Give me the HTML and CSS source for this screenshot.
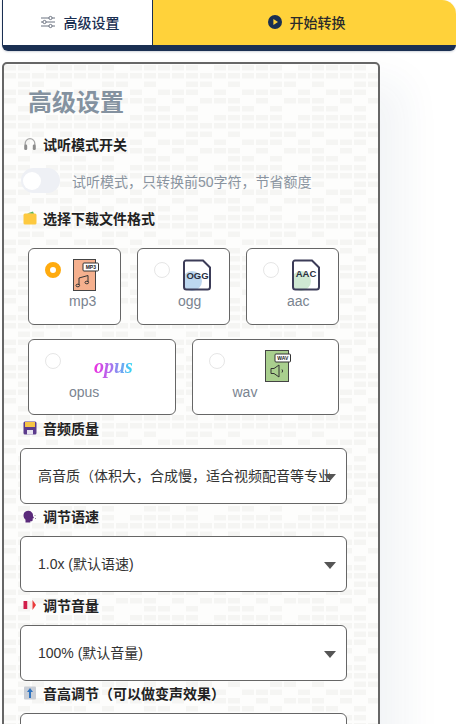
FILE: index.html
```html
<!DOCTYPE html>
<html lang="zh-CN">
<head>
    <meta charset="UTF-8">
    <meta name="viewport" content="width=device-width, initial-scale=1.0">
    <title>高级设置</title>
    <link rel="stylesheet" href="styles.css">
</head>
<body>

    <div class="tabs">
        <div class="tab tab-settings">
            <svg class="tab-icon" width="16" height="14" viewBox="0 0 16 14" fill="none" stroke="#6b7280" stroke-width="1">
                <path d="M1 3h8M12 3h3M1 7h2M6 7h9M1 11h8M12 11h3"/>
                <circle cx="10.5" cy="3" r="1.6"/>
                <circle cx="4.5" cy="7" r="1.6"/>
                <circle cx="10.5" cy="11" r="1.6"/>
            </svg>
            高级设置
        </div>
        <div class="tab tab-start">
            <svg class="tab-icon" width="14" height="14" viewBox="0 0 14 14">
                <circle cx="7" cy="7" r="7" fill="#1a2f52"/>
                <path d="M5.4 4v6L10 7z" fill="#ffd23a"/>
            </svg>
            开始转换
        </div>
    </div>

    <div class="panel">
        <h2 class="panel-title">高级设置</h2>

        <div class="label label-first">
            <svg class="emoji" viewBox="0 0 14 14">
                <path d="M2.2 8V6.500a4.800 4.800 0 0 1 9.600 0V8" fill="none" stroke="#a8a8a8" stroke-width="1.300"/>
                <rect x="1.200" y="7.500" width="3" height="5.500" rx="1.300" fill="#8d8d8d"/>
                <rect x="9.800" y="7.500" width="3" height="5.500" rx="1.300" fill="#8d8d8d"/>
            </svg>
            试听模式开关
        </div>
        <div class="toggle-row">
            <div class="toggle"><span class="knob"></span></div>
            <span class="hint">试听模式，只转换前50字符，节省额度</span>
        </div>

        <div class="label label-format">
            <svg class="emoji" viewBox="0 0 14 14">
                <path d="M4 2.500l6-2 1 2.500z" fill="#5fb55a"/>
                <rect x="0.500" y="2.500" width="13" height="11" rx="1.500" fill="#fdc93f"/>
            </svg>
            选择下载文件格式
        </div>

        <div class="formats">
            <label class="card card-small">
                <span class="radio radio-on"></span>
                <span class="card-body">
                    <svg class="file-icon icon-mp3" width="26" height="32" viewBox="0 0 26 32">
                        <rect x="0.500" y="0.500" width="22" height="31" fill="#f5b08e" stroke="#444"/>
                        <rect x="10" y="4" width="15.500" height="8" rx="1" fill="#fff" stroke="#333"/>
                        <text x="17.800" y="10.200" class="tiny-text">MP3</text>
                        <path d="M6 26V19l9-2.500V23" fill="none" stroke="#333" stroke-width="1"/>
                        <ellipse cx="4.800" cy="26.500" rx="1.800" ry="1.300" fill="none" stroke="#333"/>
                        <ellipse cx="13.800" cy="23.500" rx="1.800" ry="1.300" fill="none" stroke="#333"/>
                    </svg>
                    <span class="card-name">mp3</span>
                </span>
            </label>
            <label class="card card-small">
                <span class="radio"></span>
                <span class="card-body">
                    <svg class="file-icon icon-ogg" width="29" height="32" viewBox="0 0 29 32">
                        <circle cx="9" cy="22" r="10" fill="#bdd7ef"/>
                        <path d="M3 1.500h17l7 7V28a2.500 2.500 0 0 1-2.500 2.500H3.500A2.500 2.500 0 0 1 1 28V3.500A2 2 0 0 1 3 1.500z" fill="none" stroke="#3c3c58" stroke-width="2"/>
                        <text x="14.500" y="20" class="file-text">OGG</text>
                    </svg>
                    <span class="card-name">ogg</span>
                </span>
            </label>
            <label class="card card-small">
                <span class="radio"></span>
                <span class="card-body">
                    <svg class="file-icon icon-aac" width="29" height="32" viewBox="0 0 29 32">
                        <circle cx="9" cy="22" r="10" fill="#cfe8d3"/>
                        <path d="M3 1.500h17l7 7V28a2.500 2.500 0 0 1-2.500 2.500H3.500A2.500 2.500 0 0 1 1 28V3.500A2 2 0 0 1 3 1.500z" fill="none" stroke="#3c3c58" stroke-width="2"/>
                        <text x="14" y="18" class="file-text">AAC</text>
                    </svg>
                    <span class="card-name">aac</span>
                </span>
            </label>
            <label class="card card-wide">
                <span class="radio"></span>
                <span class="card-body">
                    <span class="opus-logo">opus</span>
                    <span class="card-name">opus</span>
                </span>
            </label>
            <label class="card card-wide">
                <span class="radio"></span>
                <span class="card-body">
                    <svg class="file-icon icon-wav" width="26" height="32" viewBox="0 0 26 32">
                        <rect x="0.500" y="0.500" width="23" height="31" fill="#a9cf8e" stroke="#444"/>
                        <rect x="10" y="4" width="15.500" height="8" rx="1" fill="#fff" stroke="#333"/>
                        <text x="17.800" y="10.200" class="tiny-text">WAV</text>
                        <path d="M6 18.500h3l5-3.500v12l-5-3.500H6z" fill="none" stroke="#333"/>
                        <path d="M17 19.500q1.200 1.500 0 3" fill="none" stroke="#333"/>
                    </svg>
                    <span class="card-name">wav</span>
                </span>
            </label>
        </div>

        <div class="label label-quality">
            <svg class="emoji" viewBox="0 0 14 14">
                <rect x="0.500" y="0.500" width="13" height="13" rx="1.500" fill="#5b3a8c"/>
                <rect x="2" y="1" width="10" height="5" fill="#f6c445"/>
                <rect x="4" y="9" width="6" height="4.500" fill="#e8e4f0"/>
            </svg>
            音频质量
        </div>
        <div class="select-wrap">
            <select class="select">
                <option>高音质（体积大，合成慢，适合视频配音等专业用途）</option>
            </select>
        </div>

        <div class="label">
            <svg class="emoji" viewBox="0 0 14 14">
                <path d="M0.500 7a4.800 4.800 0 0 1 8.800-3c.700 1 .700 2.200.700 3l1 2-1.300.500v1.500c0 1-1 1.500-2.400 1.200V13.500H2.500v-2.800A5 5 0 0 1 .500 7z" fill="#5a2a7a"/>
                <path d="M12 6v1M12.500 9v1" stroke="#888" stroke-width="0.900"/>
            </svg>
            调节语速
        </div>
        <div class="select-wrap">
            <select class="select">
                <option>1.0x (默认语速)</option>
            </select>
        </div>

        <div class="label label-volume">
            <svg class="emoji" viewBox="0 0 14 14">
                <rect x="0.500" y="3" width="4" height="8" fill="#d11f4b"/>
                <rect x="4.500" y="3" width="5" height="8" fill="#f7f0ee"/>
                <path d="M9.500 2l3.500 5-3.500 5z" fill="#ea3a3a"/>
            </svg>
            调节音量
        </div>
        <div class="select-wrap">
            <select class="select">
                <option>100% (默认音量)</option>
            </select>
        </div>

        <div class="label">
            <svg class="emoji" viewBox="0 0 14 14">
                <rect x="1" y="0.500" width="12" height="13" rx="1" fill="#c9ced6"/>
                <path d="M7 2L4 6h2v6h2V6h2z" fill="#2f74c0"/>
            </svg>
            音高调节（可以做变声效果）
        </div>
        <div class="select-wrap">
            <select class="select">
                <option>1.0 (默认音高)</option>
            </select>
        </div>
    </div>

</body>
</html>
```
FILE: styles.css
```css
html, body {
    height: 100%;
    overflow: hidden;
}
body {
    margin: 0;
    background: #fff;
    font-family: "Liberation Sans", "Noto Sans CJK SC", sans-serif;
    color: #222;
}
.tabs {
    display: flex;
    height: 45px;
    margin-left: 2px;
    border-bottom: 6px solid #1a2f52;
    border-radius: 0 14px 6px 6px;
    box-shadow: 0 1px 2px rgba(26, 47, 82, 0.2);
}
.tab {
    display: flex;
    align-items: center;
    justify-content: center;
    gap: 8px;
    box-sizing: border-box;
    padding: 0 0 1px 4px;
    font-size: 14px;
    font-weight: 500;
    color: #1a2f52;
}
.tab-settings {
    width: 151px;
    background: #fff;
    border-left: 1px solid #1a2f52;
    border-right: 1px solid #1a2f52;
}
.tab-start {
    flex: 1;
    background: #ffd23a;
    color: #2a2a2a;
    border-radius: 0 14px 0 0;
}
.tab-icon {
    flex-shrink: 0;
}
.panel {
    box-sizing: border-box;
    width: 378px;
    height: 760px;
    margin: 11px 0 0 2px;
    padding: 24px 31px 0 16px;
    border: 2px solid #666;
    border-radius: 5px;
    box-shadow: 24px 20px 40px rgba(40, 60, 100, 0.06);
    background-color: #fdfdfc;
    background-image: url("data:image/svg+xml,%3Csvg xmlns='http://www.w3.org/2000/svg' width='84' height='50'%3E%3Cg fill='%23f5f5f3'%3E%3Crect x='0' y='1' width='12' height='5.500'/%3E%3Crect x='14' y='1' width='12' height='5.500'/%3E%3Crect x='42' y='1' width='12' height='5.500'/%3E%3Crect x='56' y='1' width='12' height='5.500'/%3E%3Crect x='70' y='1' width='12' height='5.500'/%3E%3Crect x='0' y='9' width='12' height='5.500'/%3E%3Crect x='14' y='9' width='12' height='5.500'/%3E%3Crect x='28' y='9' width='12' height='5.500'/%3E%3Crect x='42' y='9' width='12' height='5.500'/%3E%3Crect x='56' y='9' width='12' height='5.500'/%3E%3Crect x='70' y='9' width='12' height='5.500'/%3E%3Crect x='14' y='17.500' width='12' height='5.500'/%3E%3Crect x='28' y='17.500' width='12' height='5.500'/%3E%3Crect x='56' y='17.500' width='12' height='5.500'/%3E%3Crect x='0' y='25.500' width='12' height='5.500'/%3E%3Crect x='14' y='25.500' width='12' height='5.500'/%3E%3Crect x='42' y='25.500' width='12' height='5.500'/%3E%3Crect x='70' y='25.500' width='12' height='5.500'/%3E%3Crect x='0' y='34' width='12' height='5.500'/%3E%3Crect x='28' y='34' width='12' height='5.500'/%3E%3Crect x='42' y='34' width='12' height='5.500'/%3E%3Crect x='56' y='34' width='12' height='5.500'/%3E%3Crect x='14' y='42' width='12' height='5.500'/%3E%3Crect x='56' y='42' width='12' height='5.500'/%3E%3Crect x='70' y='42' width='12' height='5.500'/%3E%3C/g%3E%3C/svg%3E");
}
.panel-title {
    height: 30px;
    margin: 0 0 0 8px;
    font-size: 24px;
    line-height: 30px;
    font-weight: 700;
    color: #8492a0;
}
.label {
    display: flex;
    align-items: center;
    gap: 6px;
    box-sizing: border-box;
    height: 18px;
    margin: 4px 0 0 3px;
    padding-bottom: 2px;
    font-size: 14px;
    font-weight: 700;
    color: #222;
}
.label-first {
    margin-top: 18px;
}
.label-format {
    margin-top: 17px;
}
.label-volume {
    margin-top: 5px;
}
.label-quality {
    margin-top: 5px;
}
.emoji {
    width: 14px;
    height: 14px;
    flex-shrink: 0;
}
.toggle-row {
    display: flex;
    align-items: center;
    gap: 12px;
    margin: 14px 0 0 1px;
}
.toggle {
    display: flex;
    align-items: center;
    box-sizing: border-box;
    width: 39px;
    height: 25px;
    padding-left: 2px;
    background: #eef0f5;
    border-radius: 13px;
}
.knob {
    width: 18px;
    height: 18px;
    background: #fff;
    border-radius: 50%;
}
.hint {
    font-size: 14px;
    color: #8a94a0;
}
.formats {
    display: flex;
    flex-wrap: wrap;
    gap: 14px 16px;
    width: 311px;
    margin: 20px 0 0 8px;
}
.card {
    box-sizing: border-box;
    display: flex;
    align-items: flex-start;
    gap: 8px;
    padding: 10px 0 0 16px;
    background: #fff;
    border: 1px solid #666;
    border-radius: 6px;
}
.card-small {
    width: 93px;
    height: 77px;
}
.card-wide {
    flex: 1;
    height: 76px;
}
.radio {
    box-sizing: border-box;
    flex-shrink: 0;
    width: 16px;
    height: 16px;
    margin-top: 3px;
    background: #fff;
    border: 1px solid #e6e6e6;
    border-radius: 50%;
}
.radio-on {
    border: 5px solid #ffab0f;
}
.card-body {
    display: flex;
    flex-direction: column;
    align-items: flex-start;
}
.card-name {
    margin-top: 1px;
    font-size: 14px;
    line-height: 18px;
    color: #7a8490;
}
.file-icon {
    display: block;
}
.icon-mp3 {
    margin-left: 4px;
}
.icon-ogg, .icon-aac {
    margin-left: 5px;
}
.icon-wav {
    margin-left: 32px;
}
.tiny-text {
    font-family: "Liberation Sans", sans-serif;
    font-size: 5px;
    font-weight: 700;
    fill: #222;
    text-anchor: middle;
}
.file-text {
    font-family: "Liberation Sans", sans-serif;
    font-size: 9.500px;
    font-weight: 700;
    fill: #2a3040;
    text-anchor: middle;
}
.opus-logo {
    height: 32px;
    margin-left: 25px;
    font-family: "Liberation Serif", serif;
    font-size: 20px;
    line-height: 32px;
    font-weight: 700;
    font-style: italic;
    color: transparent;
    background: linear-gradient(90deg, #ee2fe0, #9f7cf0 50%, #2fdcf5);
    -webkit-background-clip: text;
    background-clip: text;
}
.select-wrap {
    position: relative;
    width: 327px;
    height: 56px;
    margin-top: 10px;
}
.select-wrap::after {
    content: "";
    position: absolute;
    right: 11px;
    top: 26px;
    border-left: 6px solid transparent;
    border-right: 6px solid transparent;
    border-top: 7px solid #555;
}
.select {
    box-sizing: border-box;
    width: 100%;
    height: 100%;
    padding: 0 16px 0 17px;
    appearance: none;
    background: #fff;
    border: 1px solid #666;
    border-radius: 6px;
    font-family: "Liberation Sans", "Noto Sans CJK SC", sans-serif;
    font-size: 14px;
    color: #333;
}
```
